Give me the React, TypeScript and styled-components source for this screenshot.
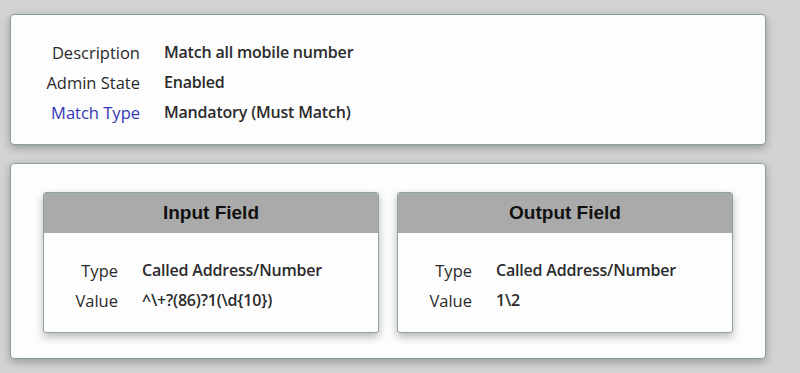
import React from "react";
import styled, { createGlobalStyle } from "styled-components";

const Global = createGlobalStyle`
  html, body { margin: 0; padding: 0; background: #d4d3d3; }
  body { font-family: "Open Sans", "Noto Sans", sans-serif; }
`;

const Page = styled.div`
  padding: 14px 34px 14px 10px;
  display: flex;
  flex-direction: column;
  gap: 18px;
`;

const Card = styled.div`
  background: #fdfdfe;
  border: 1px solid #8a9e9e;
  border-radius: 4px;
  box-shadow: 0 3px 8px rgba(0, 0, 0, 0.28);
`;

const SummaryCard = styled(Card)`
  padding: 22px 0 17px 0;
`;

const FieldsCard = styled(Card)`
  padding: 28px 32px 25px 32px;
  display: grid;
  grid-template-columns: 1fr 1fr;
  gap: 18px;
`;

const PropGrid = styled.div<{ $labelWidth: number }>`
  display: grid;
  grid-template-columns: ${(p) => p.$labelWidth}px auto;
  column-gap: 24px;
  grid-auto-rows: 30px;
  align-items: center;
`;

const Label = styled.div<{ $accent?: boolean }>`
  text-align: right;
  font-size: 16.5px;
  color: ${(p) => (p.$accent ? "#3535b8" : "#2a2a2a")};
  white-space: nowrap;
`;

const Value = styled.div`
  font-size: 16px;
  font-weight: 600;
  letter-spacing: -0.2px;
  color: #2b2b2b;
  white-space: nowrap;
`;

const FieldBox = styled.div`
  background: #fdfdfe;
  border: 1px solid #8fa3a0;
  border-radius: 3px;
  overflow: hidden;
  box-shadow: 0 4px 9px rgba(0, 0, 0, 0.28);
`;

const FieldHeader = styled.div`
  height: 40px;
  background: #aaaaaa;
  display: flex;
  align-items: center;
  justify-content: center;
  font-family: "Liberation Sans", Arial, sans-serif;
  font-weight: 700;
  font-size: 19px;
  color: #111;
`;

const FieldBody = styled.div`
  padding: 22px 0 17px 0;
`;

const rowsSummary = [
  { label: "Description", value: "Match all mobile number" },
  { label: "Admin State", value: "Enabled" },
  { label: "Match Type", value: "Mandatory (Must Match)", accent: true },
];

const fields = [
  { title: "Input Field", type: "Called Address/Number", value: "^\\+?(86)?1(\\d{10})" },
  { title: "Output Field", type: "Called Address/Number", value: "1\\2" },
];

export default function App() {
  return (
    <>
      <Global />
      <Page>
        <SummaryCard>
          <PropGrid $labelWidth={129}>
            {rowsSummary.map((r) => (
              <React.Fragment key={r.label}>
                <Label $accent={r.accent}>{r.label}</Label>
                <Value>{r.value}</Value>
              </React.Fragment>
            ))}
          </PropGrid>
        </SummaryCard>
        <FieldsCard>
          {fields.map((f) => (
            <FieldBox key={f.title}>
              <FieldHeader>{f.title}</FieldHeader>
              <FieldBody>
                <PropGrid $labelWidth={74}>
                  <Label>Type</Label>
                  <Value>{f.type}</Value>
                  <Label>Value</Label>
                  <Value>{f.value}</Value>
                </PropGrid>
              </FieldBody>
            </FieldBox>
          ))}
        </FieldsCard>
      </Page>
    </>
  );
}
